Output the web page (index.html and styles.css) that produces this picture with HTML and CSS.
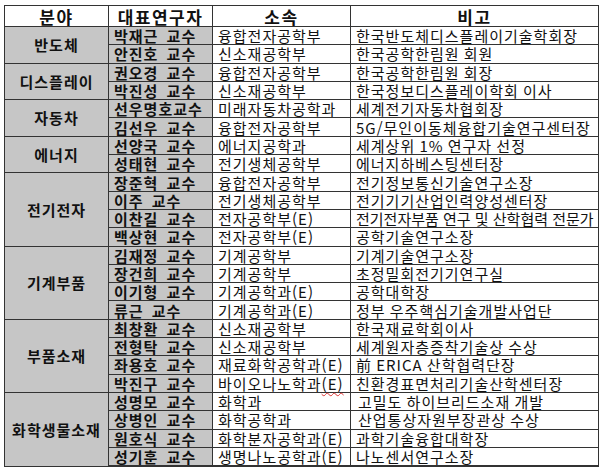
FILE: index.html
```html
<!DOCTYPE html>
<html lang="ko">
<head>
<meta charset="utf-8">
<link rel="stylesheet" href="styles.css">
</head>
<body>
<table class="tbl">
  <colgroup>
    <col class="c1"><col class="c2"><col class="c3"><col class="c4">
  </colgroup>
  <thead>
    <tr class="head"><th>분야</th><th>대표연구자</th><th>소속</th><th>비고</th></tr>
  </thead>
  <tbody>
    <tr><td class="field" rowspan="2">반도체</td><td class="name">박재근 교수</td><td>융합전자공학부</td><td>한국반도체디스플레이기술학회장</td></tr>
    <tr><td class="name">안진호 교수</td><td>신소재공학부</td><td>한국공학한림원 회원</td></tr>
    <tr><td class="field" rowspan="2">디스플레이</td><td class="name">권오경 교수</td><td>융합전자공학부</td><td>한국공학한림원 회장</td></tr>
    <tr><td class="name">박진성 교수</td><td>신소재공학부</td><td>한국정보디스플레이학회 이사</td></tr>
    <tr><td class="field" rowspan="2">자동차</td><td class="name">선우명호교수</td><td>미래자동차공학과</td><td>세계전기자동차협회장</td></tr>
    <tr><td class="name">김선우 교수</td><td>융합전자공학부</td><td>5G/무인이동체융합기술연구센터장</td></tr>
    <tr><td class="field" rowspan="2">에너지</td><td class="name">선양국 교수</td><td>에너지공학과</td><td>세계상위 1% 연구자 선정</td></tr>
    <tr><td class="name">성태현 교수</td><td>전기생체공학부</td><td>에너지하베스팅센터장</td></tr>
    <tr><td class="field" rowspan="4">전기전자</td><td class="name">장준혁 교수</td><td>융합전자공학부</td><td>전기정보통신기술연구소장</td></tr>
    <tr><td class="name">이주 교수</td><td>전기생체공학부</td><td>전기기기산업인력양성센터장</td></tr>
    <tr><td class="name">이찬길 교수</td><td>전자공학부(E)</td><td class="tight">전기전자부품 연구 및 산학협력 전문가</td></tr>
    <tr><td class="name">백상현 교수</td><td>전자공학부(E)</td><td>공학기술연구소장</td></tr>
    <tr><td class="field" rowspan="4">기계부품</td><td class="name">김재정 교수</td><td>기계공학부</td><td>기계기술연구소장</td></tr>
    <tr><td class="name">장건희 교수</td><td>기계공학부</td><td>초정밀회전기기연구실</td></tr>
    <tr><td class="name">이기형 교수</td><td>기계공학과(E)</td><td>공학대학장</td></tr>
    <tr><td class="name">류근 교수</td><td>기계공학과(E)</td><td>정부 우주핵심기술개발사업단</td></tr>
    <tr><td class="field" rowspan="4">부품소재</td><td class="name">최창환 교수</td><td>신소재공학부</td><td>한국재료학회이사</td></tr>
    <tr><td class="name">전형탁 교수</td><td>신소재공학부</td><td>세계원자층증착기술상 수상</td></tr>
    <tr><td class="name">좌용호 교수</td><td>재료화학공학과(E)</td><td>前 ERICA 산학협력단장</td></tr>
    <tr><td class="name">박진구 교수</td><td>바이오나노학과<span class="typo">(E)</span></td><td>친환경표면처리기술산학센터장</td></tr>
    <tr><td class="field" rowspan="4">화학생물소재</td><td class="name">성명모 교수</td><td>화학과</td><td class="ind">고밀도 하이브리드소재 개발</td></tr>
    <tr><td class="name">상병인 교수</td><td>화학공학과</td><td class="ind">산업통상자원부장관상 수상</td></tr>
    <tr><td class="name">원호식 교수</td><td>화학분자공학과(E)</td><td>과학기술융합대학장</td></tr>
    <tr class="last"><td class="name">성기훈 교수</td><td>생명나노공학과(E)</td><td>나노센서연구소장</td></tr>
  </tbody>
</table>
</body>
</html>
```
FILE: styles.css
```css
html, body {
  margin: 0;
  padding: 0;
  background: #fff;
}
body {
  padding: 5px 0 0 4px;
  font-family: "Noto Sans CJK KR", "Noto Sans", sans-serif;
  color: #111;
}
.tbl {
  border-collapse: collapse;
  table-layout: fixed;
  width: 594px;
  border: 1px solid #222;
}
.c1 { width: 104px; }
.c2 { width: 104px; }
.c3 { width: 138px; }
.c4 { width: 248px; }
.tbl th, .tbl td {
  border: 1px solid #333;
  padding: 0 0 0 5px;
  white-space: nowrap;
  vertical-align: middle;
  text-align: left;
}
.head th {
  height: 20px;
  font-size: 17px;
  line-height: 19px;
  letter-spacing: 1.5px;
  font-weight: 700;
  text-align: center;
  padding: 0;
  background: #fff;
}
.tbl tbody td {
  height: 17.3px;
  font-size: 15px;
  line-height: 17px;
  letter-spacing: 1px;
  word-spacing: -1px;
}
.tbl td.field {
  background: #c6c6c6;
  text-align: center;
  font-weight: 700;
  padding: 0;
}
.tbl td.name {
  background: #c6c6c6;
  font-weight: 700;
  word-spacing: 3px;
}
.tbl td.ind {
  padding-left: 7px;
}
.tbl td.tight {
  letter-spacing: 0;
  word-spacing: 0;
}
.typo {
  text-decoration: underline wavy #d33;
  text-decoration-thickness: 1px;
  text-underline-offset: 2px;
}
.last td {
  border-bottom: 2px solid #333;
}
```
